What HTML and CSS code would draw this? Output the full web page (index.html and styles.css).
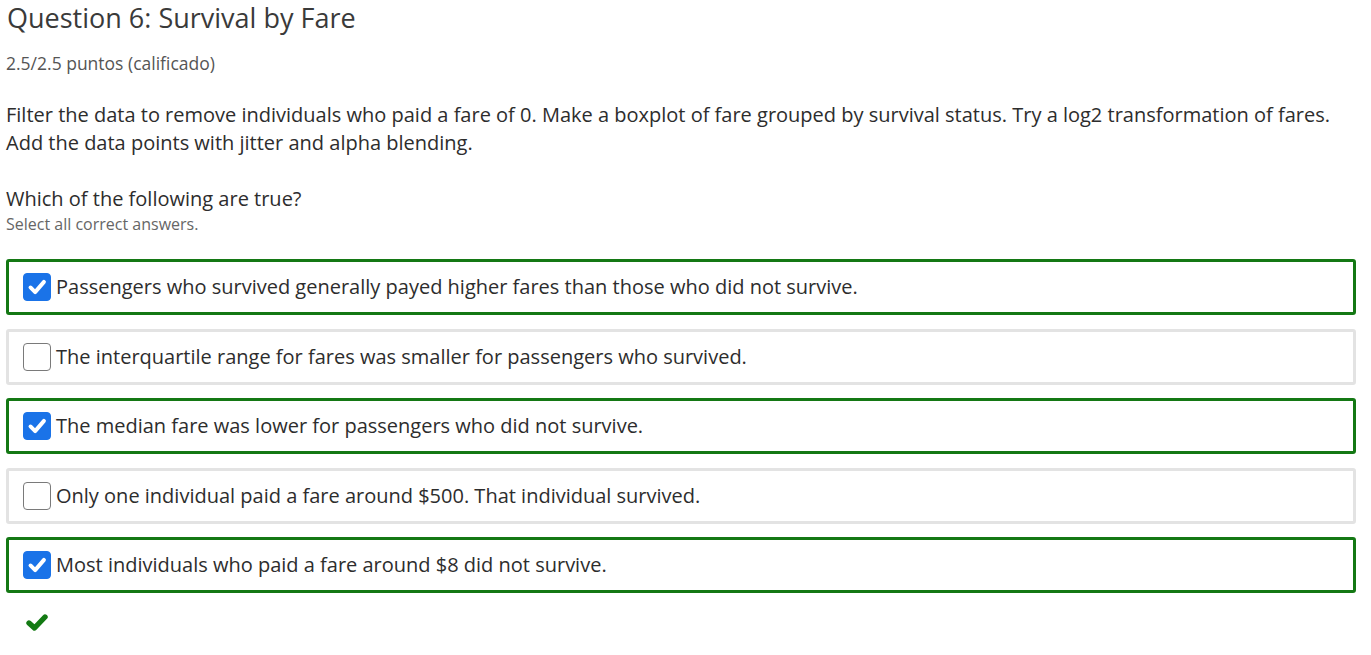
FILE: index.html
```html
<!DOCTYPE html>
<html>
<head>
<meta charset="utf-8">
<link rel="stylesheet" href="styles.css">
</head>
<body>
<div class="page">
  <h2 class="title">Question 6: Survival by Fare</h2>
  <div class="score">2.5/2.5 puntos (calificado)</div>
  <p class="prompt">Filter the data to remove individuals who paid a fare of 0. Make a boxplot of fare grouped by survival status. Try a log2 transformation of fares. Add the data points with jitter and alpha blending.</p>
  <div class="question">Which of the following are true?</div>
  <div class="hint">Select all correct answers.</div>
  <div class="options">
    <label class="option correct"><span class="box checked"><svg viewBox="0 0 28 28" width="28" height="28"><path d="M7 14.5 L12 19.5 L21.5 8.5" fill="none" stroke="#fff" stroke-width="4.2" stroke-linecap="round" stroke-linejoin="round"/></svg></span><span class="text">Passengers who survived generally payed higher fares than those who did not survive.</span></label>
    <label class="option"><span class="box"></span><span class="text">The interquartile range for fares was smaller for passengers who survived.</span></label>
    <label class="option correct"><span class="box checked"><svg viewBox="0 0 28 28" width="28" height="28"><path d="M7 14.5 L12 19.5 L21.5 8.5" fill="none" stroke="#fff" stroke-width="4.2" stroke-linecap="round" stroke-linejoin="round"/></svg></span><span class="text">The median fare was lower for passengers who did not survive.</span></label>
    <label class="option"><span class="box"></span><span class="text">Only one individual paid a fare around $500. That individual survived.</span></label>
    <label class="option correct"><span class="box checked"><svg viewBox="0 0 28 28" width="28" height="28"><path d="M7 14.5 L12 19.5 L21.5 8.5" fill="none" stroke="#fff" stroke-width="4.2" stroke-linecap="round" stroke-linejoin="round"/></svg></span><span class="text">Most individuals who paid a fare around $8 did not survive.</span></label>
  </div>
  <div class="result"><svg viewBox="0 0 22 19" width="22" height="19"><path d="M3 10 L8.5 15 L19 4" fill="none" stroke="#137a13" stroke-width="5.4" stroke-linecap="round" stroke-linejoin="round"/></svg></div>
</div>
</body>
</html>
```

FILE: styles.css
```css
html, body {
  margin: 0;
  padding: 0;
  background: #fff;
}
body {
  font-family: "Open Sans", "Noto Sans", sans-serif;
  color: #333;
}
.page {
  padding: 0 15px 0 6px;
}
.title {
  font-size: 27px;
  font-weight: 400;
  line-height: 36px;
  margin: 0;
  padding: 0 0 0 1px;
  color: #3a3a3a;
}
.score {
  font-size: 17.5px;
  color: #555;
  margin-top: 15px;
  line-height: 24px;
}
.prompt {
  font-size: 20px;
  line-height: 28px;
  margin: 26px 0 0 0;
  color: #2d2d2d;
}
.question {
  font-size: 20px;
  line-height: 28px;
  margin-top: 28px;
  color: #2d2d2d;
}
.hint {
  font-size: 16px;
  line-height: 22px;
  color: #666;
}
.options {
  display: flex;
  flex-direction: column;
  gap: 13.5px;
  margin-top: 24px;
}
.option {
  display: flex;
  align-items: center;
  height: 56px;
  box-sizing: border-box;
  border: 3px solid #e3e3e3;
  border-radius: 3px;
  padding-left: 14px;
}
.option.correct {
  border-color: #147814;
}
.box {
  width: 26px;
  height: 26px;
  border: 1px solid #7a7a7a;
  border-radius: 4px;
  box-sizing: content-box;
  flex: none;
  display: flex;
  align-items: center;
  justify-content: center;
  margin-right: 5px;
  background: #fff;
}
.box.checked {
  background: #1a73e8;
  border-color: #1a73e8;
}
.text {
  font-size: 20px;
  color: #2d2d2d;
  line-height: 28px;
}
.result {
  padding: 20px 0 0 20px;
}
.result svg {
  display: block;
}
```
